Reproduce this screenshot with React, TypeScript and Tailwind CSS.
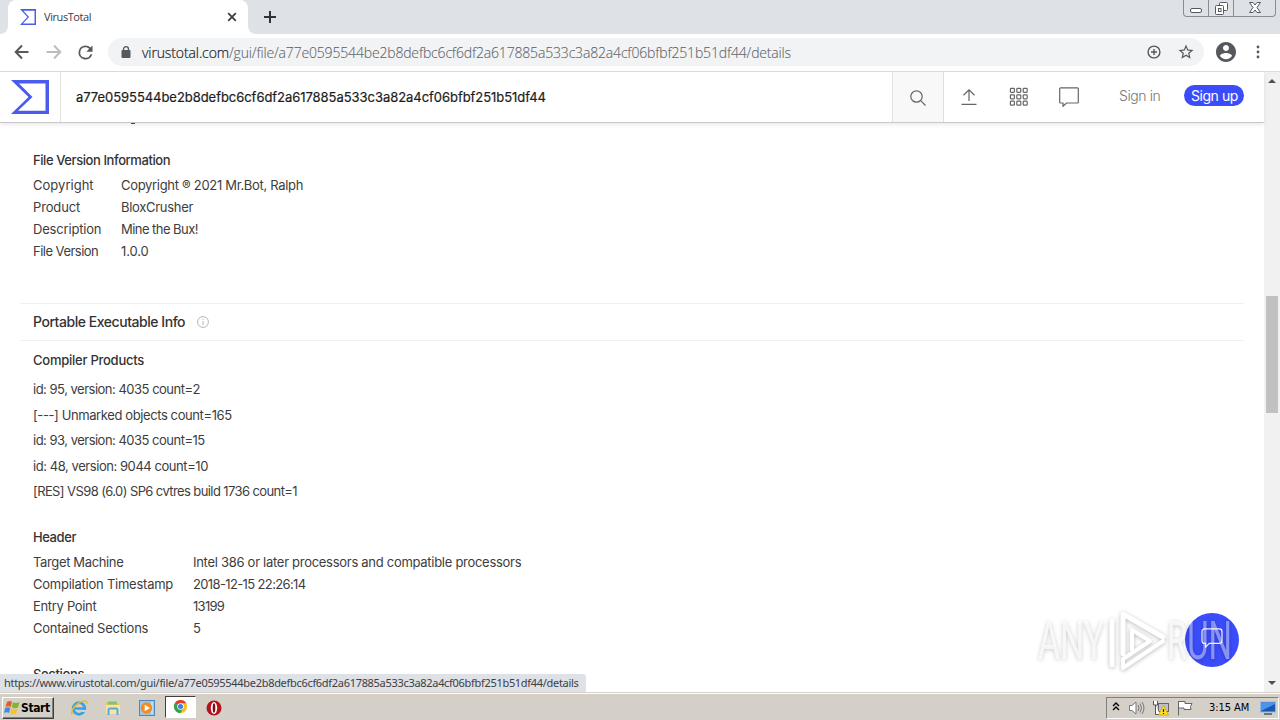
import type { ReactNode } from 'react';

const HASH = 'a77e0595544be2b8defbc6cf6df2a617885a533c3a82a4cf06bfbf251b51df44';

type Row = { label: string; value: string; labelClass?: string; valueClass?: string };

const versionRows: Row[] = [
  { label: 'Copyright', value: 'Copyright ® 2021 Mr.Bot, Ralph', labelClass: 'tracking-[0.02px]', valueClass: 'tracking-[-0.31px]' },
  { label: 'Product', value: 'BloxCrusher', labelClass: 'tracking-[-0.15px]', valueClass: 'tracking-[-0.3px]' },
  { label: 'Description', value: 'Mine the Bux!', labelClass: 'tracking-[-0.18px]', valueClass: 'tracking-[-0.55px]' },
  { label: 'File Version', value: '1.0.0', labelClass: 'tracking-[-0.52px]', valueClass: 'tracking-[-0.1px]' },
];

const headerRows: Row[] = [
  { label: 'Target Machine', value: 'Intel 386 or later processors and compatible processors', labelClass: 'tracking-[-0.36px]', valueClass: 'tracking-[-0.285px]' },
  { label: 'Compilation Timestamp', value: '2018-12-15 22:26:14', labelClass: 'tracking-[-0.24px]', valueClass: 'tracking-[-0.63px]' },
  { label: 'Entry Point', value: '13199', labelClass: 'tracking-[-0.32px]', valueClass: 'tracking-[-0.7px]' },
  { label: 'Contained Sections', value: '5', labelClass: 'tracking-[-0.25px]' },
];

const compilerProducts = [
  { text: 'id: 95, version: 4035 count=2', className: 'tracking-[-0.5px]' },
  { text: '[---] Unmarked objects count=165', className: 'tracking-[-0.4px]' },
  { text: 'id: 93, version: 4035 count=15', className: 'tracking-[-0.51px]' },
  { text: 'id: 48, version: 9044 count=10', className: 'tracking-[-0.44px]' },
  { text: '[RES] VS98 (6.0) SP6 cvtres build 1736 count=1', className: 'tracking-[-0.6px]' },
];

function VtLogo({ className }: { className: string }) {
  return (
    <svg viewBox="0 0 38 34" className={className} preserveAspectRatio="none">
      <path fill="#4a5cee" fillRule="evenodd" d="M0 0H38V34H0L17.5 17ZM8 3.5L21.5 17L7 30.8H34.5V3.5Z" />
    </svg>
  );
}

function TabStrip() {
  return (
    <div className="flex h-[34px] bg-[#dee1e6] pl-2">
      <div className="relative flex h-full w-[240px] items-center rounded-t-lg bg-white pr-2.5 pl-3">
        <div className="absolute bottom-0 -left-2 size-2 overflow-hidden bg-white">
          <div className="size-full rounded-br-lg bg-[#dee1e6]" />
        </div>
        <div className="absolute -right-2 bottom-0 size-2 overflow-hidden bg-white">
          <div className="size-full rounded-bl-lg bg-[#dee1e6]" />
        </div>
        <VtLogo className="h-4 w-4" />
        <span className="ml-2 flex-1 font-['Open_Sans',sans-serif] text-[11px] tracking-[-0.42px] text-[#3c4043]">VirusTotal</span>
        <svg viewBox="0 0 12 12" className="size-3">
          <path d="M2.2 2.2L9.8 9.8M9.8 2.2L2.2 9.8" stroke="#3c4043" strokeWidth="1.8" />
        </svg>
      </div>
      <svg viewBox="0 0 14 14" className="mt-2.5 ml-[15px] size-3.5">
        <path d="M7 1V13M1 7H13" stroke="#303338" strokeWidth="2" />
      </svg>
      <div className="mr-1 ml-auto flex h-[17px] w-[93px] rounded-b-[4px] border border-t-0 border-[#888c94] text-[#555962]">
        <div className="flex w-[25px] shrink-0 items-end justify-center border-r border-[#888c94] pb-[3px]">
          <svg viewBox="0 0 12 5" className="h-[5px] w-3">
            <rect x="0.5" y="0.5" width="11" height="4" rx="1.5" fill="#fff" stroke="currentColor" />
          </svg>
        </div>
        <div className="flex w-[25px] items-end justify-center border-r border-[#888c94] pb-px">
          <svg viewBox="0 0 13 13" className="size-[13px]" fill="#fff" stroke="currentColor">
            <rect x="4.5" y="0.5" width="8" height="8" rx="1" />
            <rect x="0.5" y="3.5" width="8" height="9" rx="1" />
            <rect x="3.5" y="6.5" width="2.5" height="3" />
          </svg>
        </div>
        <div className="flex flex-1 items-end justify-center pb-[3px]">
          <svg viewBox="0 0 12 11" className="h-[11px] w-3" fill="#fff" stroke="currentColor">
            <path d="M0.5 0.5H4L6 3L8 0.5H11.5L8 5.5L11.5 10.5H8L6 8L4 10.5H0.5L4 5.5Z" />
          </svg>
        </div>
      </div>
    </div>
  );
}

function Toolbar() {
  return (
    <div className="flex h-[37px] items-center bg-white pb-px pl-3.5">
      <svg viewBox="0 0 16 16" className="size-4" fill="none" stroke="#55585c" strokeWidth="2">
        <path d="M14.5 8H2M8 1.5L1.7 8L8 14.5" />
      </svg>
      <svg viewBox="0 0 16 16" className="ml-4 size-4" fill="none" stroke="#bbbdc0" strokeWidth="2">
        <path d="M0.5 8H14M8 1.5L14.3 8L8 14.5" />
      </svg>
      <svg viewBox="0 0 24 24" className="ml-[13px] size-[21px]" fill="#55585c">
        <path d="M17.65 6.35A7.96 7.96 0 0 0 12 4a8 8 0 1 0 7.73 10h-2.08A6 6 0 1 1 12 6c1.66 0 3.14.69 4.22 1.78L13 11h7V4z" />
      </svg>
      <div className="ml-3 flex h-7 w-[1096px] items-center rounded-full bg-[#f1f3f4] pl-[13px] font-['Open_Sans',sans-serif] text-[14px] font-light whitespace-nowrap">
        <svg viewBox="0 0 10 12" className="mr-[11px] h-3 w-2.5" fill="#55585c">
          <rect x="0.5" y="4" width="9" height="8" rx="1" />
          <path d="M2.5 5V3.2a2.5 2.5 0 0 1 5 0V5" fill="none" stroke="#55585c" strokeWidth="1.3" />
        </svg>
        <span className="tracking-[-0.11px] text-[#202124] [-webkit-text-stroke:0.2px]">virustotal.com</span>
        <span className="flex-1 tracking-[-0.17px] text-[#5f6368] [-webkit-text-stroke:0.1px]">/gui/file/{HASH}/details</span>
        <svg viewBox="0 0 14 14" className="mr-4 size-3.5" fill="none" stroke="#55585c" strokeWidth="1.4">
          <circle cx="7" cy="7" r="5.9" />
          <path d="M7 4V10M4 7H10" />
        </svg>
        <svg viewBox="0 0 24 24" className="mr-[9px] size-[18px]" fill="#55585c">
          <path d="M22 9.24l-7.19-.62L12 2 9.19 8.63 2 9.24l5.46 4.73L5.82 21 12 17.27 18.18 21l-1.63-7.03L22 9.24zM12 15.4l-3.76 2.27 1-4.28-3.32-2.88 4.38-.38L12 6.1l1.71 4.04 4.38.38-3.32 2.88 1 4.28L12 15.4z" />
        </svg>
      </div>
      <svg viewBox="2 2 20 20" className="ml-3 size-5" fill="#55585c">
        <path d="M12 2C6.48 2 2 6.48 2 12s4.48 10 10 10 10-4.48 10-10S17.52 2 12 2zm0 3c1.66 0 3 1.34 3 3s-1.34 3-3 3-3-1.34-3-3 1.34-3 3-3zm0 14.2c-2.5 0-4.71-1.28-6-3.22.03-1.99 4-3.08 6-3.08 1.99 0 5.97 1.09 6 3.08-1.29 1.94-3.5 3.22-6 3.22z" />
      </svg>
      <svg viewBox="0 0 4 14" className="ml-5 h-3.5 w-1" fill="#55585c">
        <circle cx="2" cy="2" r="1.4" />
        <circle cx="2" cy="7" r="1.4" />
        <circle cx="2" cy="12" r="1.4" />
      </svg>
    </div>
  );
}

function SiteHeader() {
  return (
    <header className="relative z-10 flex h-[51px] shrink-0 border-b border-[#c8c8c8] bg-white font-['Inter',sans-serif] shadow-[0_2px_4px_rgba(0,0,0,0.08)]">
      <div className="flex w-[61px] items-center border-r border-[#e2e2e2] pl-[11px]">
        <VtLogo className="h-[34px] w-[38px]" />
      </div>
      <div className="flex flex-1 items-center pt-0.5 pl-[15px] text-[13px] tracking-[-0.045px] text-[#1c1c1c] [-webkit-text-stroke:0.2px]">{HASH}</div>
      <div className="flex w-[52px] items-center justify-center border-x border-[#e0e0e0] bg-[#f8f8f8]">
        <svg viewBox="0 0 16 16" className="mt-0.5 size-4" fill="none" stroke="#666" strokeWidth="1.2">
          <circle cx="6.5" cy="6.5" r="5.7" />
          <path d="M10.7 10.7L15.5 15.5" />
        </svg>
      </div>
      <div className="flex w-[320px] items-center text-[#666]">
        <svg viewBox="0 0 16 16" className="ml-[17px] size-4" fill="none" stroke="currentColor" strokeWidth="1.2">
          <path d="M8 12V1M2.5 6.2L8 0.9L13.5 6.2M0.5 15.3H15.5" />
        </svg>
        <svg viewBox="0 0 20 20" className="ml-8 h-5 w-5" fill="none" stroke="currentColor" strokeWidth="1.2">
          {[1.6, 8, 14.4].map((y) =>
            [1.6, 8, 14.4].map((x) => <rect key={`${x}-${y}`} x={x - 0.2} y={y - 0.2} width="4" height="4" rx="0.8" />),
          )}
        </svg>
        <svg viewBox="0 0 20 20" className="ml-[30px] size-5" fill="none" stroke="currentColor" strokeWidth="1.2">
          <path d="M1.6 0.8H18.4Q19.3 0.8 19.3 1.7V15.2Q19.3 16 18.4 16H7.5L4 19.3V16H1.6Q0.7 16 0.7 15.2V1.7Q0.7 0.8 1.6 0.8Z" />
        </svg>
        <span className="mb-1 ml-10 text-[14px] font-light tracking-[-0.4px] text-[#777]">Sign in</span>
        <span className="mb-1 ml-6 flex h-[21px] w-[60px] items-center justify-center rounded-full bg-[#3b4cfa] text-[14px] tracking-[-0.42px] text-white">
          Sign up
        </span>
      </div>
    </header>
  );
}

function Heading({ children, className }: { children: ReactNode; className: string }) {
  return <h3 className={`h-[22px] pl-[33px] font-medium whitespace-nowrap text-[#333] ${className}`}>{children}</h3>;
}

function Rows({ rows, labelWidth }: { rows: Row[]; labelWidth: string }) {
  return (
    <div className="mt-[2.5px] pl-[33px]">
      {rows.map((row) => (
        <div key={row.label} className="flex h-[22px] whitespace-nowrap">
          <span className={`${labelWidth} ${row.labelClass ?? ''}`}>{row.label}</span>
          <span className={row.valueClass}>{row.value}</span>
        </div>
      ))}
    </div>
  );
}

function Details() {
  return (
    <main className="min-h-0 flex-1 overflow-hidden font-['Inter',sans-serif] text-[13px] leading-[22px] text-[#3d3d3d]">
      <div className="ml-[131px] h-[1px] w-1 bg-[#444]" />
      <Heading className="mt-[25px] tracking-[-0.42px]">File Version Information</Heading>
      <Rows rows={versionRows} labelWidth="w-[88px]" />
      <div className="mx-5 mt-[41.5px] flex h-[38px] items-center border-y border-[#f0f0f0] pl-[13px]">
        <h2 className="text-[14px] font-medium tracking-[-0.46px] text-[#333]">Portable Executable Info</h2>
        <svg viewBox="0 0 12 12" className="ml-3 size-3" fill="none" stroke="#b5b5b5">
          <circle cx="6" cy="6" r="5.4" />
          <path d="M6 5V9M6 2.8V4" />
        </svg>
      </div>
      <Heading className="mt-2 tracking-[-0.25px]">Compiler Products</Heading>
      <ul className="mt-[6px] pl-[33px] leading-[25.5px]">
        {compilerProducts.map((p) => (
          <li key={p.text} className={`h-[25.5px] whitespace-nowrap ${p.className}`}>
            {p.text}
          </li>
        ))}
      </ul>
      <Heading className="mt-[21.5px] tracking-[-0.42px]">Header</Heading>
      <Rows rows={headerRows} labelWidth="w-40" />
      <Heading className="mt-6 tracking-[-0.35px]">Sections</Heading>
    </main>
  );
}

function Scrollbar() {
  return (
    <div className="flex w-4 flex-col items-center bg-[#f1f1f1]">
      <svg viewBox="0 0 8 4" className="mt-[7px] h-1 w-2" fill="#505050">
        <path d="M0 4L4 0L8 4Z" />
      </svg>
      <div className="mt-[213px] h-[117px] w-3 bg-[#c1c1c1]" />
      <svg viewBox="0 0 8 4" className="mt-auto mb-[7px] h-1 w-2" fill="#505050">
        <path d="M0 0L4 4L8 0Z" />
      </svg>
    </div>
  );
}

function Watermark() {
  return (
    <svg
      viewBox="0 0 210 70"
      className="absolute right-[40px] bottom-[14px] h-[70px] w-[210px] overflow-visible opacity-55 drop-shadow-[0_1px_2px_rgba(0,0,0,0.5)]"
      fill="#fff"
      fillOpacity="0.75"
      fontFamily="Roboto, sans-serif"
      fontSize="53"
    >
      <text x="8" y="51" textLength="66" lengthAdjust="spacingAndGlyphs">
        ANY
      </text>
      <text x="137" y="51" textLength="65" lengthAdjust="spacingAndGlyphs">
        RUN
      </text>
      <g fill="none" stroke="#fff" strokeWidth="5" strokeLinejoin="round" strokeLinecap="round">
        <path d="M93 46V6L133 29" />
        <path d="M82 13V57" />
        <path d="M133 33L93 60V51L120 33L102 22V42" strokeWidth="4" />
      </g>
    </svg>
  );
}

function Taskbar() {
  return (
    <footer className="flex h-7 items-center border-t border-[#d4d0c8] bg-[#d4d0c8] font-['DejaVu_Sans_Condensed','DejaVu_Sans',sans-serif] shadow-[inset_0_1px_0_#fff]">
      <div className="mt-0.5 ml-0.5 flex h-[22px] w-[52px] items-center border border-t-white border-r-[#404040] border-b-[#404040] border-l-white pl-px shadow-[inset_-1px_-1px_0_#808080]">
        <svg viewBox="0 0 16 16" className="size-4 shrink-0">
          <path d="M3 2Q6 0 8 2L6.7 7Q4 5.5 1.5 7Z" fill="#e8592b" />
          <path d="M9 2.3Q12 4 15.5 2L14 7.5Q11 9 7.7 7.2Z" fill="#7fb82d" />
          <path d="M1.2 8Q4 6.5 6.4 8L5 13Q2.5 11.5 0 13Z" fill="#3f8edb" />
          <path d="M7.4 8.3Q10.5 10 13.7 8.5L12.2 13.5Q9 15.5 6 13.3Z" fill="#f9c22e" />
        </svg>
        <span className="ml-px text-[12px] font-bold tracking-[-0.4px] text-black">Start</span>
      </div>
      <svg viewBox="0 0 18 18" className="mt-0.5 ml-4 size-[18px]" fill="none">
        <circle cx="9" cy="9.5" r="5.8" stroke="#35a4e6" strokeWidth="2.8" />
        <path d="M4.5 9.5H14.5" stroke="#35a4e6" strokeWidth="2.4" />
        <path d="M12 12H16" stroke="#d4d0c8" strokeWidth="2" />
        <path d="M2.5 15.5C-1 13 7 2 15 2Q17.5 2 16.5 5" stroke="#edb92e" strokeWidth="1.4" />
      </svg>
      <svg viewBox="0 0 16 16" className="mt-0.5 ml-[17px] size-4">
        <path d="M1 2H6L7 3.5H14V14H1Z" fill="#e9c55b" />
        <rect x="3" y="1.5" width="9" height="3" fill="#7fc46f" />
        <path d="M1 5H15V14H1Z" fill="#f8e4a0" />
        <path d="M3.5 15V10Q3.5 8.5 5 8.5H11Q12.5 8.5 12.5 10V15" fill="none" stroke="#59a9df" strokeWidth="2" />
      </svg>
      <svg viewBox="0 0 16 16" className="mt-0.5 ml-[18px] size-4">
        <rect x="0.5" y="0.5" width="15" height="15" fill="#9cc7ea" stroke="#4b88bd" />
        <path d="M13 2V14" stroke="#e9f5fc" />
        <circle cx="7.5" cy="8" r="5.7" fill="#f58a1f" />
        <path d="M5.7 4.8L11 8L5.7 11.2Z" fill="#fff" />
      </svg>
      <div className="ml-2.5 flex h-[22px] w-[31px] items-center justify-center border border-t-[#404040] border-r-white border-b-white border-l-[#404040] bg-white">
        <svg viewBox="0 0 16 16" className="size-[15px]">
          <circle cx="8" cy="8" r="7" fill="#fbc116" />
          <path d="M8 8L1.94 4.5A7 7 0 0 1 14.06 4.5H8Z" fill="#e33b2e" />
          <path d="M1.94 4.5A7 7 0 0 0 8 15L11 9.7L8 8Z" fill="#32a350" />
          <circle cx="8" cy="8" r="3.5" fill="#fff" />
          <circle cx="8" cy="8" r="2.7" fill="#3f7de8" />
        </svg>
      </div>
      <svg viewBox="0 0 16 16" className="mt-0.5 ml-[10px] size-4">
        <circle cx="8" cy="8" r="7.5" fill="#b5121b" />
        <ellipse cx="8" cy="8" rx="3.2" ry="6" fill="#fff" />
        <ellipse cx="8" cy="8" rx="1.3" ry="4.8" fill="#7d0a10" />
      </svg>
      <div className="mt-0.5 mr-px ml-auto flex h-[22px] w-[173px] items-center border border-t-[#808080] border-r-white border-b-white border-l-[#808080] pl-[5px]">
        <svg viewBox="0 0 8 9" className="mb-0.5 h-[9px] w-2" fill="none" stroke="#000" strokeWidth="1.4">
          <path d="M1 4L4 1L7 4M1 8L4 5L7 8" />
        </svg>
        <svg viewBox="0 0 16 14" className="ml-[9px] h-3.5 w-4" fill="none" stroke="#777">
          <path d="M0.5 4.5H3L7 1V13L3 9.5H0.5Z" fill="#fff" />
          <path d="M9 4Q11 7 9 10M11 2.5Q14 7 11 11.5M13 1Q17 7 13 13" />
        </svg>
        <svg viewBox="0 0 16 16" className="ml-2 size-4">
          <rect x="5.5" y="3.5" width="10" height="8" fill="#b9c3cf" stroke="#666" />
          <path d="M0.5 1V5H4.5V1M2.5 5V14.5H7" fill="#fff" stroke="#555" />
          <path d="M10.5 5L15.5 15H5.5Z" fill="#ffdc2e" stroke="#c9a400" strokeWidth="0.7" />
          <path d="M10.5 9V12M10.5 13V14" stroke="#222" strokeWidth="1.2" />
        </svg>
        <svg viewBox="0 0 16 16" className="ml-2 size-4" fill="#fff" stroke="#666">
          <path d="M1.5 1V15.5M1.5 1.5H8V3.5H15L13.5 6.5L14 9.5H7V8H1.5" />
        </svg>
        <span className="mt-0.5 ml-4 text-[11px] tracking-[-0.05px] text-black">3:15 AM</span>
        <svg viewBox="0 0 16 14" className="ml-[11px] h-3.5 w-4">
          <rect x="0.5" y="1" width="15" height="10" fill="#1857b4" stroke="#8fb9e8" />
          <path d="M1 10L15 3V1.5H1Z" fill="#4d94e6" />
          <path d="M4 13H12" stroke="#555" strokeWidth="1.5" />
        </svg>
      </div>
    </footer>
  );
}

export default function App() {
  return (
    <div className="flex h-[720px] w-[1280px] flex-col overflow-hidden bg-white">
      <TabStrip />
      <Toolbar />
      <div className="relative flex min-h-0 flex-1 border-t border-[#dadce0]">
        <div className="flex min-w-0 flex-1 flex-col">
          <SiteHeader />
          <Details />
        </div>
        <Scrollbar />
        <div className="absolute right-[41px] bottom-[25px] flex size-[54px] items-center justify-center rounded-full bg-[#3b4cfa]">
          <svg viewBox="0 0 24 22" className="mb-1 h-[20px] w-[22px]" fill="none" stroke="#fff" strokeWidth="1.3">
            <path d="M4 1H20Q23 1 23 4V14Q23 17 20 17H9L5 21V17H4Q1 17 1 14V4Q1 1 4 1Z" />
          </svg>
        </div>
        <Watermark />
        <div className="absolute bottom-0 left-0 flex h-[18px] w-[586px] items-center rounded-tr-[3px] bg-[#dee1e6] pl-1 font-['Noto_Sans',sans-serif] text-[11px] tracking-[-0.302px] whitespace-nowrap text-[#3c4043]">
          https://www.virustotal.com/gui/file/{HASH}/details
        </div>
      </div>
      <Taskbar />
    </div>
  );
}
